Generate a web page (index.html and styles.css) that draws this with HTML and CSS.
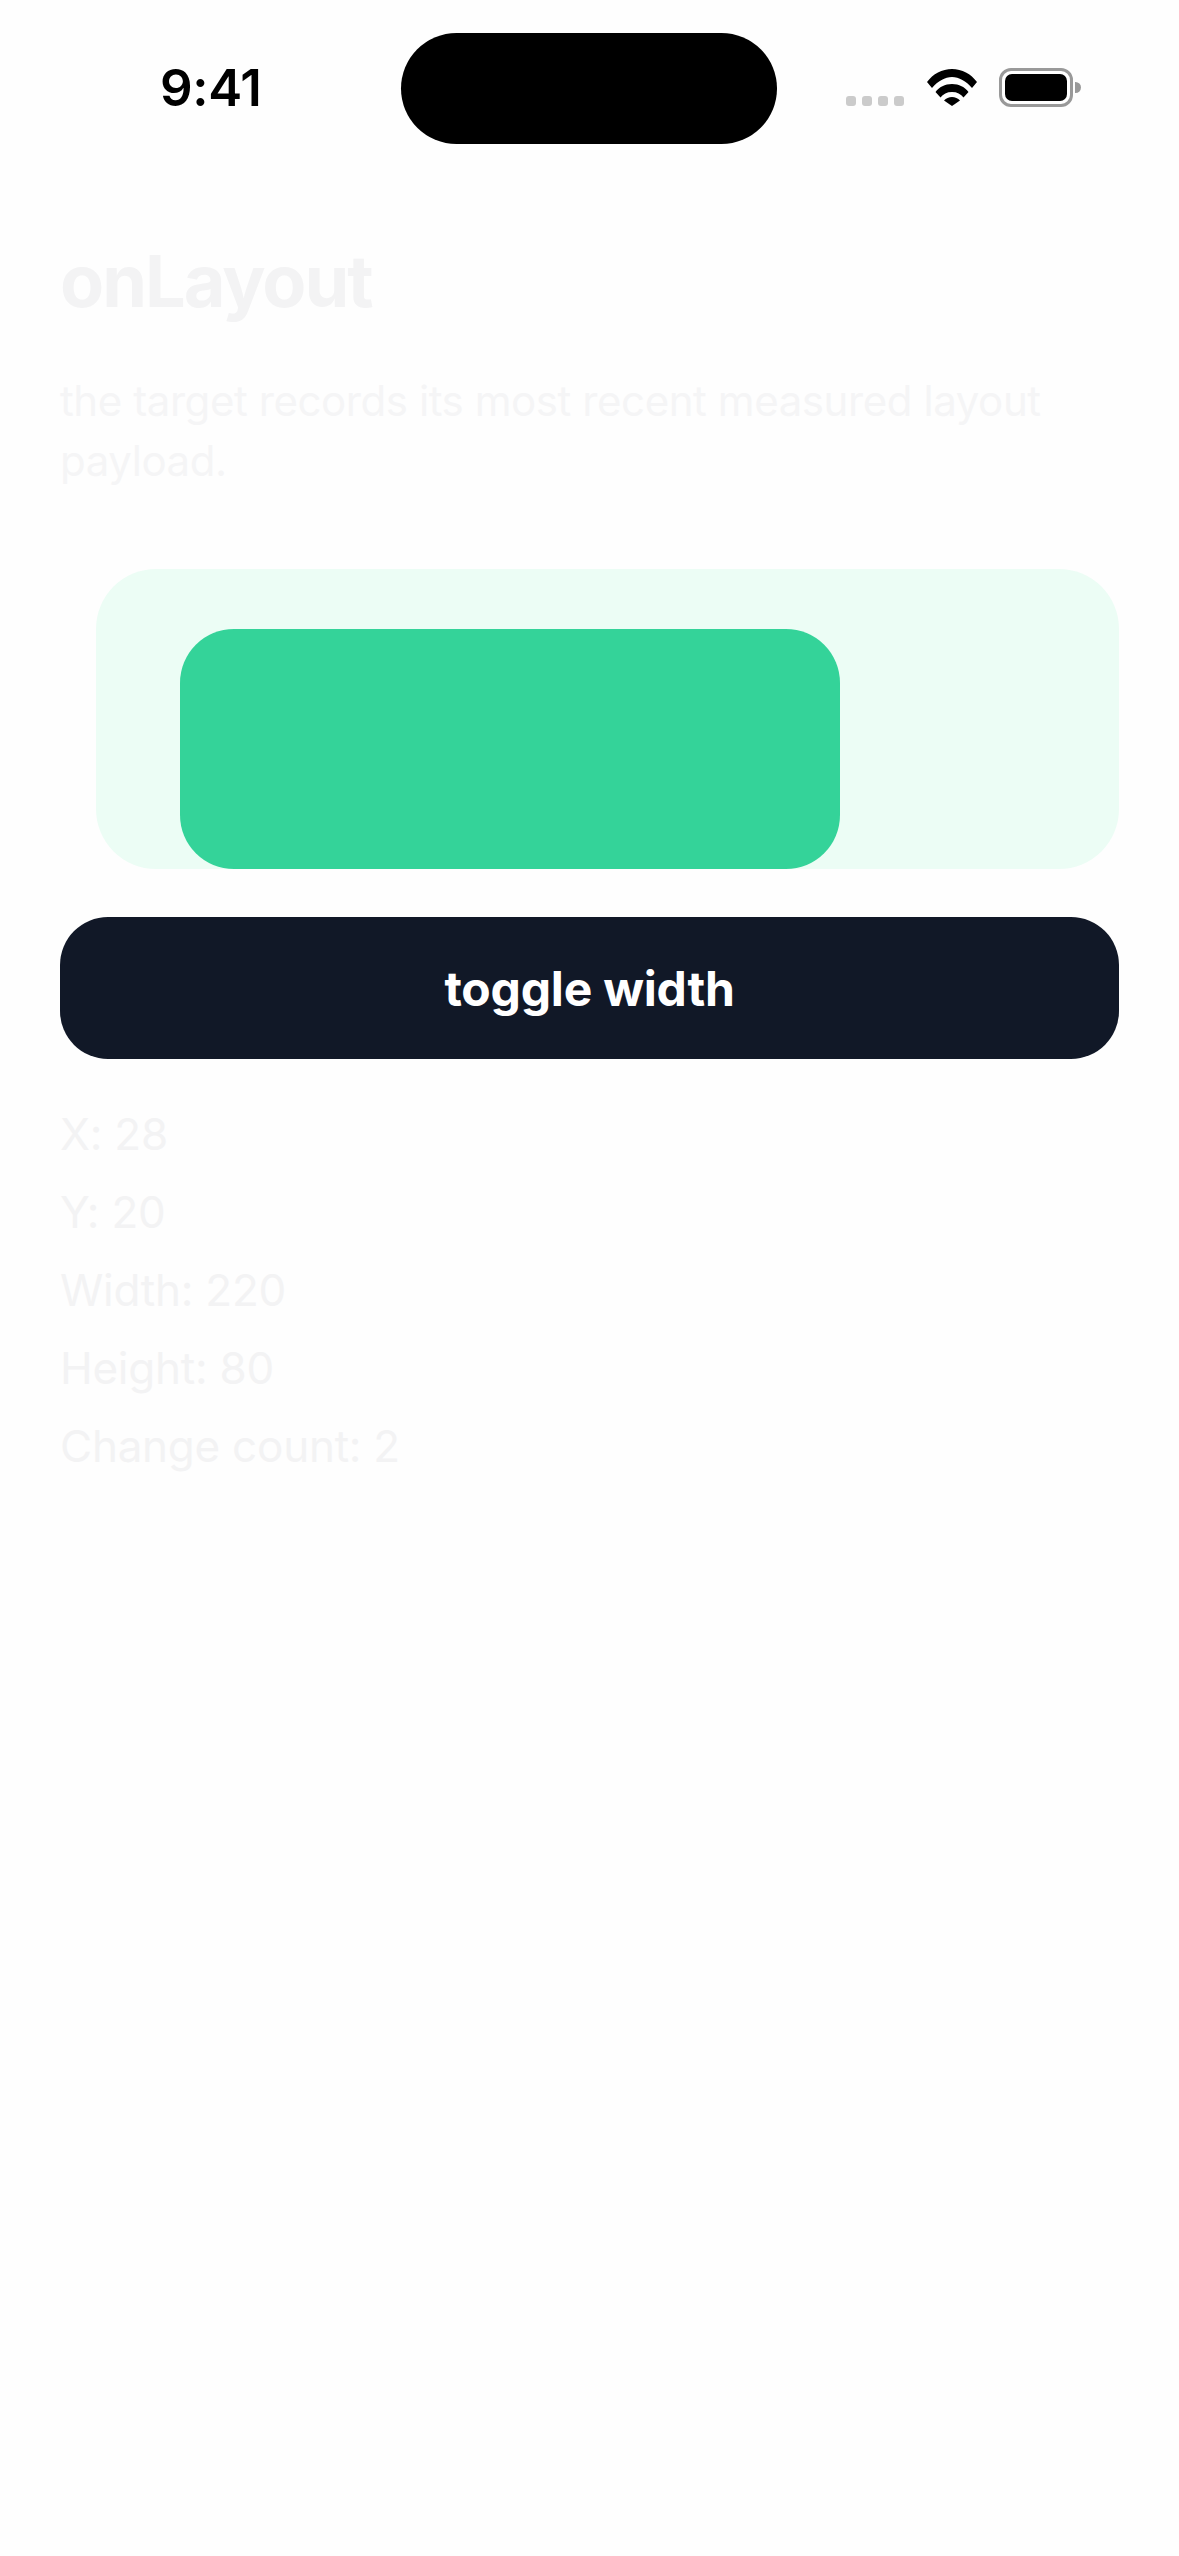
FILE: index.html
```html
<!DOCTYPE html>
<html lang="en">
<head>
  <meta charset="UTF-8" />
  <meta name="viewport" content="width=device-width, initial-scale=1.0"/>
  <title>onLayout</title>
  <link rel="stylesheet" href="styles.css">
</head>
<body>
  <div class="status-bar">
    <div class="time">9:41</div>
    <div class="island"></div>
    <div class="status-icons">
      <div class="signal">
        <span></span><span></span><span></span><span></span>
      </div>
      <svg class="wifi" width="50" height="37" viewBox="0 0 50 37">
        <path d="M0 13C6 5 15 0 25 0C35 0 44 5 50 13L45 19C39 12 32 8 25 8C18 8 11 12 5 19Z"/>
        <path d="M8.5 23C12 18 18 15 25 15C32 15 38 18 41.5 23L36.5 28.5C34 25 30 23 25 23C20 23 16 25 13.5 28.5Z"/>
        <path d="M17 31.5C19 29.5 22 28 25 28C28 28 31 29.5 33 31.5L25 37Z"/>
      </svg>
      <div class="battery">
        <div class="battery-level"></div>
      </div>
      <div class="battery-cap"></div>
    </div>
  </div>

  <main class="screen">
    <h1>onLayout</h1>
    <p class="desc">the target records its most recent measured layout payload.</p>

    <div class="track">
      <div class="target"></div>
    </div>

    <button class="toggle">toggle width</button>

    <div class="stats">
      <div>X: 28</div>
      <div>Y: 20</div>
      <div>Width: 220</div>
      <div>Height: 80</div>
      <div>Change count: 2</div>
    </div>
  </main>
</body>
</html>
```

FILE: styles.css
```css
* {
  box-sizing: border-box;
  font-family: Inter, 'Liberation Sans', sans-serif;
}

html, body {
  height: 100%;
}

body {
  margin: 0;
  background: #fefefe;
}

.status-bar {
  display: grid;
  grid-template-columns: 401px 376px 1fr;
  height: 177px;
  padding-top: 33px;
}

.time {
  padding: 38px 0 0 160px;
  font-size: 51px;
  line-height: 33px;
  font-weight: 600;
  letter-spacing: -0.3px;
  color: #000;
}

.island {
  width: 376px;
  height: 111px;
  border-radius: 56px;
  background: #000;
}

.status-icons {
  display: flex;
  align-items: flex-start;
  padding: 35px 0 0 69px;
}

.signal {
  display: flex;
  gap: 6px;
  margin: 28px 0 0 0;
}

.signal span {
  width: 10px;
  height: 10px;
  border-radius: 3px;
  background: #cbcbcb;
}

.wifi {
  margin: 1px 0 0 23px;
  fill: #000;
}

.battery {
  width: 74px;
  height: 39px;
  margin: 0 0 0 22px;
  padding: 3px;
  border: 3px solid #999;
  border-radius: 12px;
  background: #fff;
}

.battery-level {
  width: 100%;
  height: 100%;
  border-radius: 7px;
  background: #000;
}

.battery-cap {
  width: 6px;
  height: 11px;
  margin: 14px 0 0 2px;
  border-radius: 0 6px 6px 0;
  background: #999;
}

.screen {
  padding: 62px 60px 0;
}

h1 {
  margin: 0;
  font-size: 72px;
  line-height: 84px;
  font-weight: 700;
  letter-spacing: -2px;
  color: #f3f3f4;
}

.desc {
  margin: 48px 0 0;
  font-size: 42px;
  line-height: 60px;
  letter-spacing: -0.42px;
  color: #f5f5f6;
}

.track {
  height: 300px;
  margin: 78px 0 0 36px;
  padding: 60px 0 0 84px;
  border-radius: 60px;
  background: #ecfdf5;
}

.target {
  width: 660px;
  height: 240px;
  border-radius: 54px;
  background: #34d399;
}

.toggle {
  display: block;
  width: 100%;
  height: 142px;
  margin-top: 48px;
  border: none;
  border-radius: 48px;
  font-size: 48px;
  font-weight: 700;
  letter-spacing: -0.2px;
  color: #fff;
  background: #111827;
}

.stats {
  margin-top: 36px;
  font-size: 44px;
  line-height: 78px;
  letter-spacing: -0.25px;
  color: #f3f3f4;
}
```
